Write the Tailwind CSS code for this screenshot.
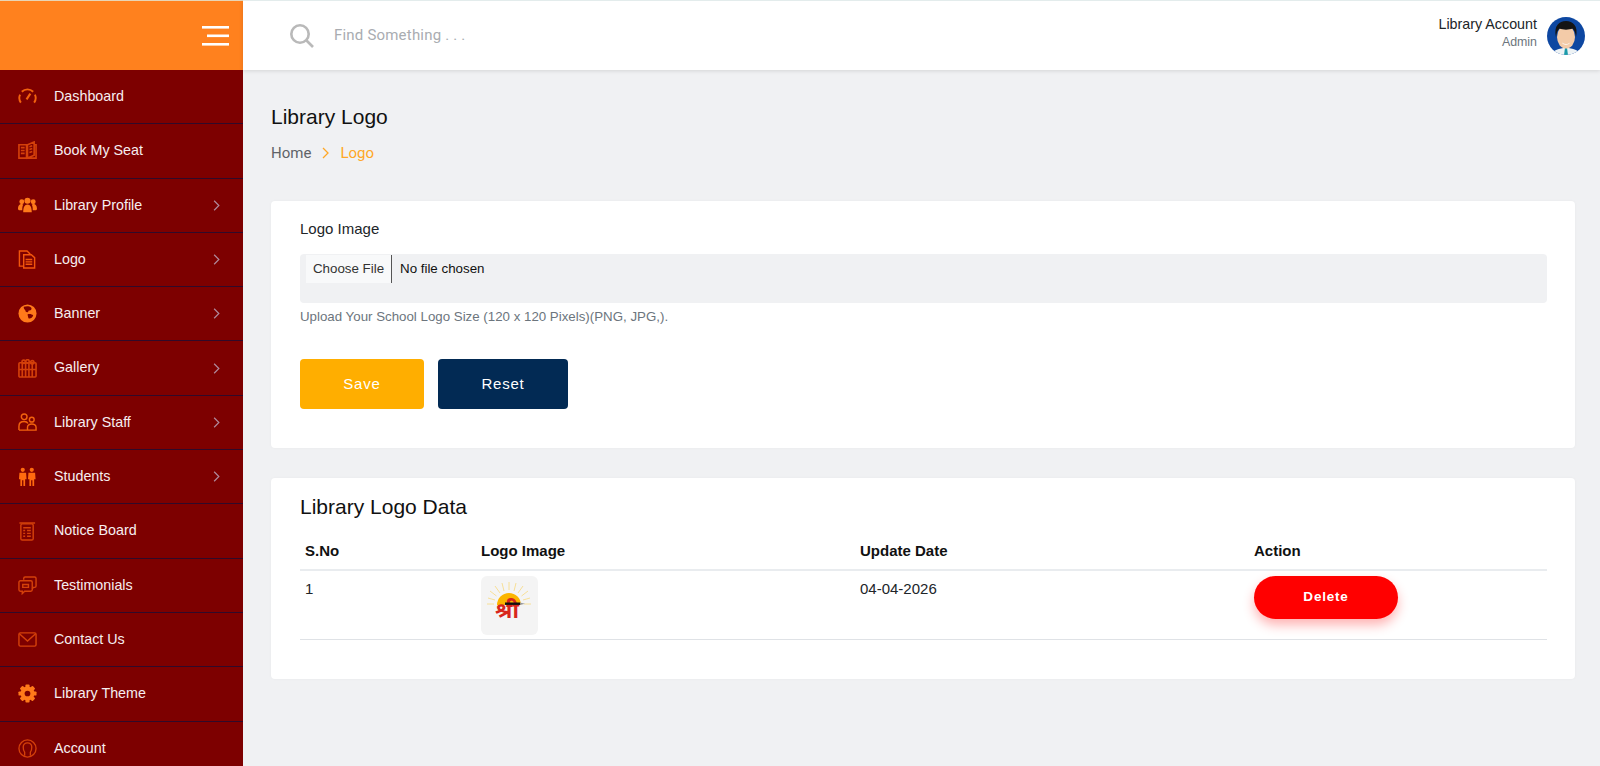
<!DOCTYPE html>
<html lang="en">
<head>
  <meta charset="UTF-8" />
  <meta name="viewport" content="width=device-width, initial-scale=1.0" />
  <title>Library Logo</title>
  <script src="https://cdn.jsdelivr.net/npm/@tailwindcss/browser@4"></script>
</head>
<body class="bg-[#f0f1f3] h-screen overflow-hidden font-['Liberation_Sans',Arial,sans-serif]">
<div class="flex h-[766px]">

  <!-- sidebar -->
  <aside class="w-[243px] shrink-0 bg-[#7d0000] flex flex-col overflow-hidden">
    <div class="h-[70px] shrink-0 bg-[#ff811e] border-t border-[#e8d5b5] flex items-center justify-end pr-[14px]">
      <svg width="27" height="20" viewBox="0 0 27 20" fill="#fff"><rect x="0" y="0" width="27" height="2.600"/><rect x="5" y="8.500" width="22" height="2.600"/><rect x="0" y="17" width="27" height="2.600"/></svg>
    </div>
    <nav class="text-[14.3px] text-[#f6eef0]">
      <a class="h-[54.3px] flex items-center border-b border-[#2f0a2a] pl-[18px] pr-[23px]">
        <svg class="w-[19px] h-[19px] mr-[17px]" viewBox="0 0 20 20" fill="none" stroke="#f2620e" stroke-width="2"><path d="M3 16.500A8.500 8.500 0 0 1 2.200 8M4 5A8.500 8.500 0 0 1 16 5M17.800 8A8.500 8.500 0 0 1 17 16.500"/><path d="M9 13 13 7" stroke-width="2.200"/></svg>
        <span>Dashboard</span>
      </a>
      <a class="h-[54.3px] flex items-center border-b border-[#2f0a2a] pl-[18px] pr-[23px]">
        <svg class="w-[19px] h-[19px] mr-[17px]" viewBox="0 0 20 20" fill="none" stroke="#d4400a" stroke-width="1.700"><path d="M1 4h8v14H1zM10 18V4l7-3v14zM17 4h2v14h-9M3 7h4M3 10h4M3 13h4M12 6l3-1M12 9l3-1M12 12l3-1"/></svg>
        <span>Book My Seat</span>
      </a>
      <a class="h-[54.3px] flex items-center border-b border-[#2f0a2a] pl-[18px] pr-[23px]">
        <svg class="w-[19px] h-[19px] mr-[17px]" viewBox="0 0 20 20" fill="#ff7a1a"><circle cx="4" cy="6" r="2.600"/><circle cx="16" cy="6" r="2.600"/><circle cx="10" cy="5" r="3.200"/><path d="M0 14c0-4 1.500-5.500 4-5.500l1.500.5C4.500 11 4.500 13 4.500 15H1zM20 14c0-4-1.500-5.500-4-5.500l-1.500.5c1 2 1 4 1 6H19zM5.500 17c0-5 1.500-8 4.500-8s4.500 3 4.500 8z"/></svg>
        <span>Library Profile</span>
        <svg class="ml-auto w-[7px] h-[11px]" viewBox="0 0 8 14" fill="none" stroke="#b08a9c" stroke-width="1.500"><path d="M1 1l6 6-6 6"/></svg>
      </a>
      <a class="h-[54.3px] flex items-center border-b border-[#2f0a2a] pl-[18px] pr-[23px]">
        <svg class="w-[19px] h-[19px] mr-[17px]" viewBox="0 0 20 20" fill="none" stroke="#f2560c" stroke-width="1.500"><path d="M1.500 1h8l3 3v13h-11z"/><path d="M6 5h8l3.500 3v11H6z" fill="#7d0000"/><path d="M8 10h7M8 12.500h7M8 15h7"/></svg>
        <span>Logo</span>
        <svg class="ml-auto w-[7px] h-[11px]" viewBox="0 0 8 14" fill="none" stroke="#b08a9c" stroke-width="1.500"><path d="M1 1l6 6-6 6"/></svg>
      </a>
      <a class="h-[54.3px] flex items-center border-b border-[#2f0a2a] pl-[18px] pr-[23px]">
        <svg class="w-[19px] h-[19px] mr-[17px]" viewBox="0 0 20 20"><circle cx="10" cy="10" r="9.500" fill="#ff7a1a"/><path d="M6 3c3-1 6-1 8 1 1 2-1 3-3 3 0 2-2 2-3 1 0-2-2-2-2-5zM10 11c2-1 5 0 6 1-1 2-3 4-5 3z" fill="#7d0000"/></svg>
        <span>Banner</span>
        <svg class="ml-auto w-[7px] h-[11px]" viewBox="0 0 8 14" fill="none" stroke="#b08a9c" stroke-width="1.500"><path d="M1 1l6 6-6 6"/></svg>
      </a>
      <a class="h-[54.3px] flex items-center border-b border-[#2f0a2a] pl-[18px] pr-[23px]">
        <svg class="w-[19px] h-[19px] mr-[17px]" viewBox="0 0 20 20" fill="none" stroke="#d4400a" stroke-width="1.700"><rect x="1" y="4" width="18" height="15" rx="1"/><path d="M4.500 4v15M8 4v15M11.500 4v15M15 4v15M1 11h18"/><circle cx="6" cy="3" r="1.800"/><circle cx="10" cy="2.500" r="1.800"/><circle cx="15" cy="3.500" r="1.800"/></svg>
        <span>Gallery</span>
        <svg class="ml-auto w-[7px] h-[11px]" viewBox="0 0 8 14" fill="none" stroke="#b08a9c" stroke-width="1.500"><path d="M1 1l6 6-6 6"/></svg>
      </a>
      <a class="h-[54.3px] flex items-center border-b border-[#2f0a2a] pl-[18px] pr-[23px]">
        <svg class="w-[19px] h-[19px] mr-[17px]" viewBox="0 0 20 20" fill="none" stroke="#f2620e" stroke-width="1.500"><circle cx="6.500" cy="4" r="3"/><circle cx="14.500" cy="7" r="2.500"/><path d="M1 18v-4c0-3 2-5 5.500-5 2 0 3.500 1 4 2M1 18h18v-3c0-2-2-3.500-4.500-3.500S10 13 10 15v3"/></svg>
        <span>Library Staff</span>
        <svg class="ml-auto w-[7px] h-[11px]" viewBox="0 0 8 14" fill="none" stroke="#b08a9c" stroke-width="1.500"><path d="M1 1l6 6-6 6"/></svg>
      </a>
      <a class="h-[54.3px] flex items-center border-b border-[#2f0a2a] pl-[18px] pr-[23px]">
        <svg class="w-[19px] h-[19px] mr-[17px]" viewBox="0 0 20 20" fill="#ff6a0f"><circle cx="5" cy="3" r="2.200"/><circle cx="14.500" cy="3" r="2.200"/><path d="M1.500 6h7l.5 7H7.500v7H5.700v-6h-1.400v6H2.500v-7H1zM11 6h7l.5 7H17v7h-1.800v-6h-1.400v6H12v-7h-1.500z"/></svg>
        <span>Students</span>
        <svg class="ml-auto w-[7px] h-[11px]" viewBox="0 0 8 14" fill="none" stroke="#b08a9c" stroke-width="1.500"><path d="M1 1l6 6-6 6"/></svg>
      </a>
      <a class="h-[54.3px] flex items-center border-b border-[#2f0a2a] pl-[18px] pr-[23px]">
        <svg class="w-[19px] h-[19px] mr-[17px]" viewBox="0 0 20 20" fill="none" stroke="#d4400a" stroke-width="1.500"><rect x="3" y="2" width="13" height="17" rx="1.500"/><path d="M1.500 1H18M5.500 6h8M5.500 9h2M9.500 9h4M5.500 12h2M9.500 12h4M5.500 15h2M9.500 15h4"/></svg>
        <span>Notice Board</span>
      </a>
      <a class="h-[54.3px] flex items-center border-b border-[#2f0a2a] pl-[18px] pr-[23px]">
        <svg class="w-[19px] h-[19px] mr-[17px]" viewBox="0 0 20 20" fill="none" stroke="#d4400a" stroke-width="1.500"><path d="M6 4V2.500A1.500 1.500 0 0 1 7.500 1h10A1.500 1.500 0 0 1 19 2.500v8a1.500 1.500 0 0 1-1.500 1.500H16l-1 2"/><path d="M2.500 5h11A1.500 1.500 0 0 1 15 6.500v8a1.500 1.500 0 0 1-1.500 1.500H7l-2.500 2.500V16h-2A1.500 1.500 0 0 1 1 14.500v-8A1.500 1.500 0 0 1 2.500 5zM5 9h6v3H5z"/></svg>
        <span>Testimonials</span>
      </a>
      <a class="h-[54.3px] flex items-center border-b border-[#2f0a2a] pl-[18px] pr-[23px]">
        <svg class="w-[19px] h-[19px] mr-[17px]" viewBox="0 0 20 20" fill="none" stroke="#d4400a" stroke-width="1.500"><rect x="1" y="3" width="18" height="14" rx="1.500"/><path d="M1.500 4 10 11.500 18.500 4"/></svg>
        <span>Contact Us</span>
      </a>
      <a class="h-[54.3px] flex items-center border-b border-[#2f0a2a] pl-[18px] pr-[23px]">
        <svg class="w-[19px] h-[19px] mr-[17px]" viewBox="0 0 20 20" fill="#ff7a1a">
          <rect x="7.800" y="0.500" width="4.400" height="19" rx="1"/>
          <rect x="7.800" y="0.500" width="4.400" height="19" rx="1" transform="rotate(45 10 10)"/>
          <rect x="7.800" y="0.500" width="4.400" height="19" rx="1" transform="rotate(90 10 10)"/>
          <rect x="7.800" y="0.500" width="4.400" height="19" rx="1" transform="rotate(135 10 10)"/>
          <circle cx="10" cy="10" r="7.300"/>
          <circle cx="10" cy="10" r="3" fill="#7d0000"/>
        </svg>
        <span>Library Theme</span>
      </a>
      <a class="h-[54.3px] flex items-center pl-[18px] pr-[23px]">
        <svg class="w-[19px] h-[19px] mr-[17px]" viewBox="0 0 20 20" fill="none" stroke="#d4400a" stroke-width="1.400"><circle cx="10" cy="10" r="9"/><path d="M7 17.500v-3.500C5.500 12.500 5.500 10.500 5.500 8.500a4.500 4.500 0 0 1 9 0c0 2 0 4-1.500 5.500v3.500"/></svg>
        <span>Account</span>
      </a>
    </nav>
  </aside>

  <div class="flex-1 min-w-0">
    <!-- top bar -->
    <header class="h-[70px] bg-white border-t border-[#e3ecec] shadow-[0_1px_4px_rgba(0,0,0,0.12)] flex items-center pl-[47px] pr-[15px]">
      <svg class="w-[24px] h-[24px] mr-[20px]" viewBox="0 0 24 24" fill="none" stroke="#b9b9b9" stroke-width="2.600"><circle cx="10" cy="10" r="8.700"/><path d="M16.500 16.500 23 23"/></svg>
      <span class="text-[15px] text-[#a9acb1] font-['Roboto',sans-serif] tracking-[0.2px]">Find Something . . .</span>
      <div class="ml-auto text-right mr-[10px] mb-[4px]">
        <div class="text-[14.3px] leading-[17px] text-[#212529]">Library Account</div>
        <div class="text-[12.4px] leading-[17px] text-[#6c757d] mt-[1px]">Admin</div>
      </div>
      <svg class="w-[38px] h-[38px]" viewBox="0 0 38 38">
        <clipPath id="av"><circle cx="19" cy="19" r="19"/></clipPath>
        <g clip-path="url(#av)">
          <rect width="38" height="38" fill="#0d47a1"/>
          <path d="M5 38c1-5 7-7 14-7s13 2 14 7z" fill="#eef3f5"/>
          <path d="M18 31h2l1 7h-4z" fill="#1b9aaa"/>
          <ellipse cx="19" cy="20" rx="9" ry="11.500" fill="#f3cba8"/>
          <path d="M9 20C6.500 9 12 4 19 4s12.500 5 10 16c-.5-4-1.500-7-3.500-8.500-3 1.500-10 1.500-13 0-2 1.500-3 4.500-3.500 8.500z" fill="#141414"/>
          <path d="M15 25.500c2.500 2 5.500 2 8 0-1 3-7 3-8 0z" fill="#fff"/>
        </g>
      </svg>
    </header>

    <main class="pl-[28px] pr-[25px] pt-[35px]">
      <h1 class="text-[21px] leading-[24px] text-[#111]">Library Logo</h1>
      <div class="flex items-center mt-[14px] text-[15px] leading-[20px] font-['Roboto',sans-serif]">
        <span class="text-[#5f6368]">Home</span>
        <svg class="w-[7px] h-[12px] mx-[11px]" viewBox="0 0 7 12" fill="none" stroke="#ffa726" stroke-width="1.300"><path d="M1 1l5 5-5 5"/></svg>
        <span class="text-[#ffa726]">Logo</span>
      </div>

      <!-- upload card -->
      <section class="mt-[38px] bg-white rounded-[4px] shadow-[0_0_3px_rgba(0,0,0,0.04)] h-[247px] pl-[29px] pr-[28px] pt-[19px]">
        <label class="block text-[15px] leading-[17px] text-[#212529]">Logo Image</label>
        <div class="mt-[17px] h-[49px] bg-[#f0f1f3] rounded-[4px] pl-[6px] pt-[1px] flex items-start">
          <span class="h-[28px] w-[86px] bg-[#f8f9fa] border-r border-[#555] flex items-center justify-center text-[13.33px] text-[#333]">Choose File</span>
          <span class="h-[28px] flex items-center pl-[8px] text-[13.33px] text-[#111]">No file chosen</span>
        </div>
        <p class="mt-[6px] text-[13.3px] leading-[16px] text-[#6c757d]">Upload Your School Logo Size (120 x 120 Pixels)(PNG, JPG,).</p>
        <div class="flex gap-[14px] mt-[34px]">
          <button class="w-[124px] h-[50px] rounded-[4px] bg-[#ffae00] text-white text-[15px] tracking-[0.8px]">Save</button>
          <button class="w-[130px] h-[50px] rounded-[4px] bg-[#022a54] text-white text-[15px] tracking-[0.8px]">Reset</button>
        </div>
      </section>

      <!-- data card -->
      <section class="mt-[30px] bg-white rounded-[4px] shadow-[0_0_3px_rgba(0,0,0,0.04)] h-[201px] pl-[29px] pr-[28px] pt-[17px]">
        <h2 class="text-[21px] leading-[24px] text-[#111]">Library Logo Data</h2>
        <table class="w-full table-fixed mt-[12px] text-[15px] text-[#212529]">
          <colgroup><col class="w-[176px]"/><col class="w-[379px]"/><col class="w-[394px]"/><col/></colgroup>
          <thead>
            <tr class="border-b-2 border-[#e9ecef] text-[#111]">
              <th class="h-[39px] px-[5px] pt-[2px] text-left font-bold">S.No</th>
              <th class="h-[39px] px-[5px] pt-[2px] text-left font-bold">Logo Image</th>
              <th class="h-[39px] px-[5px] pt-[2px] text-left font-bold">Update Date</th>
              <th class="h-[39px] px-[5px] pt-[2px] text-left font-bold">Action</th>
            </tr>
          </thead>
          <tbody>
            <tr class="border-b border-[#dfe2e6]">
              <td class="px-[5px] pt-[7px] pb-[4px] align-top">1</td>
              <td class="px-[5px] pt-[5px] pb-[4px] align-top">
                <div class="w-[57px] h-[59px] rounded-[6px] bg-[#f4f4f4]">
                  <svg class="w-[57px] h-[59px]" viewBox="0 0 57 59">
                    <g stroke="#f7dd8c" stroke-width="0.900" fill="none">
                      <path d="M28 14V6M23 15 21 7M33 15 35 7M19 17 14 10M37 17 42 10M15.500 20 9 15M40.500 20 47 15M14 24 7 22M42 24 49 22M13 28H6M43 28h7"/>
                    </g>
                    <path d="M16 29a12 12 0 0 1 24 0z" fill="#fbb500"/>
                    <text x="26" y="42" text-anchor="middle" font-size="22" font-weight="700" fill="#d8261c" font-family="'Noto Sans','Liberation Sans',sans-serif">श्री</text>
                    <rect x="24" y="26.500" width="15" height="2.400" fill="#111"/>
                    <path d="M39 26.500 44 27.700 39 28.900z" fill="#999"/>
                  </svg>
                </div>
              </td>
              <td class="px-[5px] pt-[7px] pb-[4px] align-top">04-04-2026</td>
              <td class="px-[5px] pt-[5px] pb-[4px] align-top">
                <button class="w-[144px] h-[43px] rounded-full bg-[#ff0000] text-white text-[13.5px] font-bold tracking-[0.8px] shadow-[0_6px_12px_rgba(255,0,0,0.3)]">Delete</button>
              </td>
            </tr>
          </tbody>
        </table>
      </section>
    </main>
  </div>
</div>
</body>
</html>
